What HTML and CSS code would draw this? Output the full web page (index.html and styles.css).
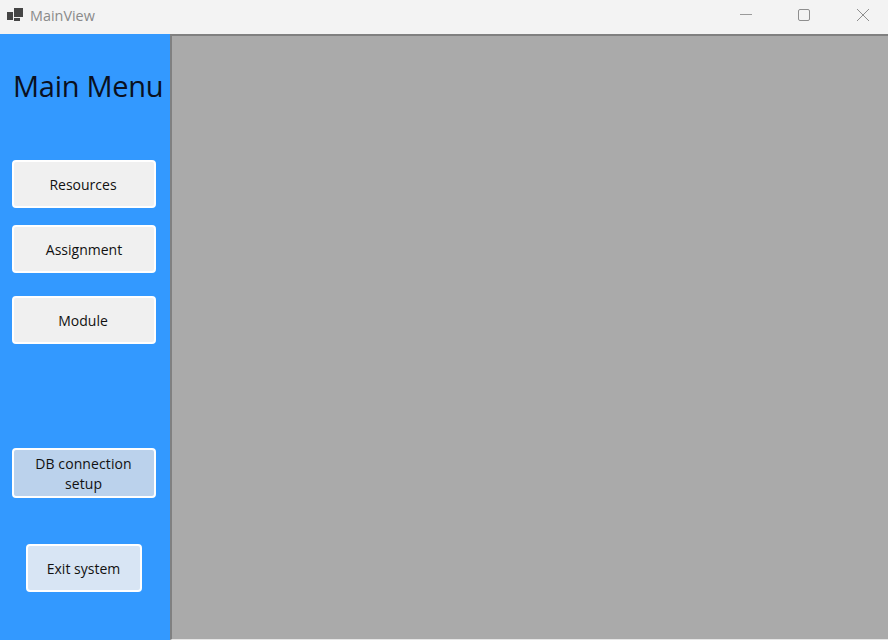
FILE: index.html
```html
<!DOCTYPE html>
<html lang="en">
<head>
<meta charset="utf-8">
<title>MainView</title>
<link rel="stylesheet" href="styles.css">
</head>
<body>
<div class="window">
  <header class="titlebar">
    <svg class="app-icon" width="16" height="14" viewBox="0 0 16 14">
      <rect x="0" y="4" width="6" height="8" fill="#454545"/>
      <rect x="7" y="0" width="9" height="9" fill="#454545"/>
      <rect x="7" y="10" width="6" height="3" fill="#454545"/>
    </svg>
    <span class="app-title">MainView</span>
    <div class="controls">
      <span class="control">
        <svg width="14" height="14" viewBox="0 0 14 14"><path d="M2 6.5H14" stroke="#9a9a9a" fill="none"/></svg>
      </span>
      <span class="control">
        <svg width="14" height="14" viewBox="0 0 14 14"><rect x="1.5" y="1.5" width="11" height="11" rx="1.5" stroke="#8e8e8e" fill="none"/></svg>
      </span>
      <span class="control">
        <svg width="14" height="14" viewBox="0 0 14 14"><path d="M1 1L13 13M13 1L1 13" stroke="#8e8e8e" fill="none"/></svg>
      </span>
    </div>
  </header>
  <main class="body">
    <nav class="sidebar">
      <h1 class="menu-title">Main Menu</h1>
      <button class="btn btn-resources">Resources</button>
      <button class="btn btn-assignment">Assignment</button>
      <button class="btn btn-module">Module</button>
      <button class="btn btn-db">DB connection<br>setup</button>
      <button class="btn btn-exit">Exit system</button>
    </nav>
    <section class="content"></section>
  </main>
</div>
</body>
</html>
```
FILE: styles.css
```css
* { box-sizing: border-box; }
html, body { margin: 0; height: 100%; }
body { font-family: "Open Sans", "Noto Sans", sans-serif; background: #f3f3f3; overflow: hidden; }
.window { width: 888px; height: 640px; display: flex; flex-direction: column; }
.titlebar { height: 34px; flex: none; background: #f3f3f3; display: flex; align-items: center; padding-left: 7px; }
.app-icon { flex: none; margin-top: -4px; }
.app-title { margin-left: 7px; font-size: 14.4px; color: #8a8a8a; margin-top: -4px; }
.controls { margin-left: auto; display: flex; padding-right: 18px; gap: 45px; margin-top: -4px; }
.control { display: flex; width: 14px; height: 14px; }
.body { flex: 1; display: flex; min-height: 0; }
.sidebar { width: 170px; flex: none; background: #3399ff; display: flex; flex-direction: column; align-items: flex-start; padding: 2px 0 0 12px; }
.menu-title { margin: 30px 0 0 1px; font-size: 29px; line-height: 40px; font-weight: 400; color: #0a1020; white-space: nowrap; letter-spacing: -0.27px; }
.btn { display: block; width: 144px; height: 48px; padding: 2px 2px 0 0; border: 2px solid #fff; border-radius: 4px; background: #f0f0f0; font-family: inherit; font-size: 14px; line-height: 20px; color: #111; text-align: center; }
.btn-resources { margin-top: 54px; }
.btn-assignment { margin-top: 17px; padding-right: 0; }
.btn-module { margin-top: 23px; }
.btn-db { margin-top: 104px; height: 50px; background: #bbd2ec; padding-top: 3px; padding-bottom: 1px; padding-right: 1px; letter-spacing: 0.1px; }
.btn-exit { margin-top: 46px; margin-left: 14px; width: 116px; background: #d8e5f4; padding-right: 1px; }
.content { flex: 1; background: #aaaaaa; border-top: 2px solid #808080; border-left: 2px solid #808080; border-bottom: 1px solid #e6e6e6; }
```
